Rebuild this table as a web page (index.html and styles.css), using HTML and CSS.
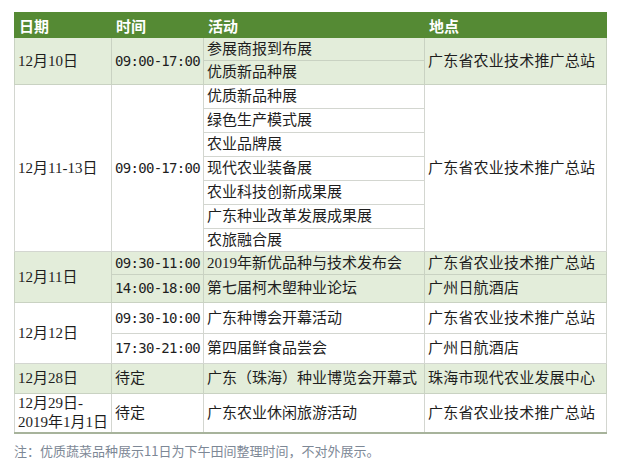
FILE: index.html
```html
<!DOCTYPE html>
<html lang="zh-CN">
<head>
<meta charset="utf-8">
<title>日程</title>
<link rel="stylesheet" href="styles.css">
</head>
<body>
<div class="page">
<table class="sched">
  <colgroup>
    <col class="c-date"><col class="c-time"><col class="c-act"><col class="c-place">
  </colgroup>
  <thead>
    <tr class="head"><th>日期</th><th>时间</th><th>活动</th><th>地点</th></tr>
  </thead>
  <tbody class="green">
    <tr class="h23"><td rowspan="2">12月10日</td><td rowspan="2" class="time">09:00-17:00</td><td>参展商报到布展</td><td rowspan="2" class="place">广东省农业技术推广总站</td></tr>
    <tr class="h24"><td>优质新品种展</td></tr>
  </tbody>
  <tbody>
    <tr class="h24"><td rowspan="7">12月11-13日</td><td rowspan="7" class="time">09:00-17:00</td><td>优质新品种展</td><td rowspan="7" class="place">广东省农业技术推广总站</td></tr>
    <tr class="h24"><td>绿色生产模式展</td></tr>
    <tr class="h24"><td>农业品牌展</td></tr>
    <tr class="h24"><td>现代农业装备展</td></tr>
    <tr class="h24"><td>农业科技创新成果展</td></tr>
    <tr class="h24"><td>广东种业改革发展成果展</td></tr>
    <tr class="h23"><td>农旅融合展</td></tr>
  </tbody>
  <tbody class="green">
    <tr class="h23"><td rowspan="2">12月11日</td><td class="time">09:30-11:00</td><td>2019年新优品种与技术发布会</td><td class="place">广东省农业技术推广总站</td></tr>
    <tr class="h28"><td class="time">14:00-18:00</td><td>第七届柯木塱种业论坛</td><td class="place">广州日航酒店</td></tr>
  </tbody>
  <tbody>
    <tr class="h31"><td rowspan="2">12月12日</td><td class="time">09:30-10:00</td><td>广东种博会开幕活动</td><td class="place">广东省农业技术推广总站</td></tr>
    <tr class="h30"><td class="time">17:30-21:00</td><td>第四届鲜食品尝会</td><td class="place">广州日航酒店</td></tr>
  </tbody>
  <tbody class="green">
    <tr class="h30"><td>12月28日</td><td>待定</td><td>广东（珠海）种业博览会开幕式</td><td class="place">珠海市现代农业发展中心</td></tr>
  </tbody>
  <tbody class="last">
    <tr class="h39"><td class="two">12月29日-<br>2019年1月1日</td><td>待定</td><td>广东农业休闲旅游活动</td><td class="place">广东省农业技术推广总站</td></tr>
  </tbody>
</table>
<p class="note">注：优质蔬菜品种展示11日为下午田间整理时间，不对外展示。</p>
</div>
</body>
</html>
```

FILE: styles.css
```css
html, body {
  margin: 0;
  padding: 0;
  background: #ffffff;
}
.page {
  padding: 12px 14px 0 14px;
}
.sched {
  border-collapse: collapse;
  table-layout: fixed;
  width: 592px;
  font-family: "Liberation Serif", "Noto Sans CJK SC", serif;
  font-size: 15px;
  color: #1e1e1e;
}
.c-date { width: 97px; }
.c-time { width: 92px; }
.c-act { width: 221px; }
.c-place { width: 182px; }
.sched th, .sched td {
  padding: 0 0 0 3px;
  text-align: left;
  vertical-align: middle;
  border: 1px solid #d3d6d0;
  white-space: nowrap;
  overflow: hidden;
  line-height: 19px;
}
.head th {
  height: 24px;
  background: #558a34;
  color: #ffffff;
  font-family: "Noto Sans CJK SC", sans-serif;
  font-weight: bold;
  font-size: 15px;
  border-color: #558a34;
  padding-left: 4px;
}
.green td {
  background: #e3edda;
  border-color: #c9d2c2;
}
.time {
  font-family: "DejaVu Sans Mono", "Noto Sans CJK SC", monospace;
  font-size: 14px;
  letter-spacing: -0.7px;
}
.place {
  letter-spacing: 0.2px;
}
.last td {
  border-bottom: 2px solid #a7b39b;
}
.two {
  line-height: 19px;
}
.h23 { height: 23px; }
.h24 { height: 24px; }
.h28 { height: 28px; }
.h30 { height: 30px; }
.h31 { height: 31px; }
.h39 { height: 39px; }
.note {
  margin: 8px 0 0 0;
  font-family: "Noto Sans CJK SC", sans-serif;
  font-size: 13px;
  line-height: 18px;
  color: #7d8896;
}
```
